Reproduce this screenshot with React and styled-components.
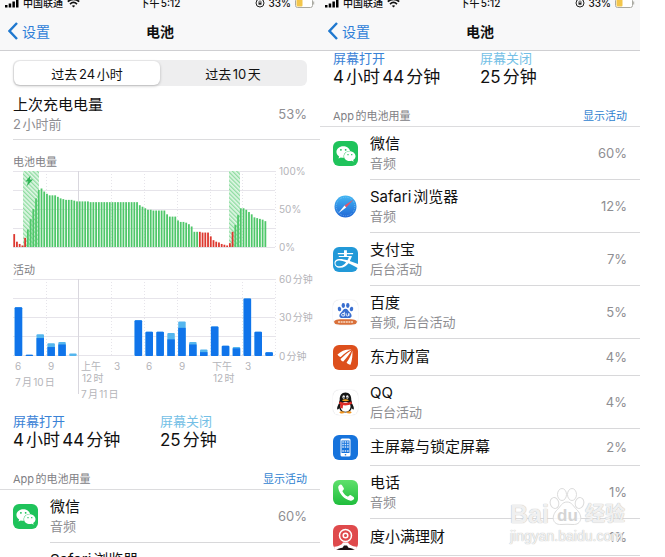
import React from 'react';
import styled, { createGlobalStyle } from 'styled-components';
import { FaWeixin, FaAlipay } from 'react-icons/fa';

const GlobalStyle = createGlobalStyle`
  * {
    box-sizing: border-box;
  }

  body {
    margin: 0;
    background: #fff;
    color: #111;
    font-family: Inter, 'Noto Sans CJK SC', sans-serif;
    text-autospace: normal;
  }

  button {
    border: 0;
    padding: 0;
    background: none;
    font: inherit;
  }
`;

const Page = styled.main`
  position: relative;
  display: grid;
  grid-template-columns: 1fr 1fr;
  height: 100vh;
  padding-right: 25px;
  overflow: hidden;
`;

const Phone = styled.section`
  min-width: 0;
  overflow: hidden;
`;

const Header = styled.header`
  position: relative;
  z-index: 1;
  background: #f8f8f9;
  border-bottom: 1px solid #cfcfd2;
`;

const StatusBar = styled.div`
  display: grid;
  grid-template-columns: 1fr auto 1fr;
  grid-template-rows: 100%;
  align-items: end;
  height: 12px;
  padding: 0 5px 2px;
  overflow: hidden;
  font-size: 10px;
  font-weight: 500;
  line-height: 14px;
`;

const StatusGroup = styled.div`
  display: flex;
  align-items: center;
  justify-content: ${({ $end }) => ($end ? 'flex-end' : 'flex-start')};
  gap: 4px;
`;

const NavBar = styled.nav`
  display: grid;
  grid-template-columns: 1fr auto 1fr;
  align-items: center;
  height: 38px;
  padding: 0 8px;
`;

const BackLink = styled.a`
  display: flex;
  align-items: center;
  gap: 4px;
  color: #2f7fd8;
  font-size: 14px;
  text-decoration: none;
`;

const Title = styled.h1`
  margin: 0;
  font-size: 14px;
  font-weight: 700;
`;

const Segments = styled.div`
  display: grid;
  grid-template-columns: 1fr 1fr;
  height: 26px;
  margin: 9px 13px;
  padding: 1px;
  border-radius: 6px;
  background: #eeeeef;
`;

const Segment = styled.button`
  border-radius: 6px;
  background: ${({ $active }) => ($active ? '#fff' : 'transparent')};
  box-shadow: ${({ $active }) => ($active ? '0 1px 3px rgba(0, 0, 0, 0.25)' : 'none')};
  color: #111;
  font-size: 13px;
`;

const Summary = styled.div`
  display: flex;
  align-items: center;
  justify-content: space-between;
  margin-left: 13px;
  padding: 0 13px 6px 0;
  border-bottom: 1px solid #dcdcde;
`;

const Name = styled.div`
  font-size: 15px;
  line-height: 20px;
`;

const Detail = styled.div`
  color: #8e8e92;
  font-size: 13px;
  line-height: 18px;
`;

const Percent = styled.span`
  color: #8e8e92;
  font-size: 13px;
`;

const Charts = styled.div`
  padding: 15px 0 0 13px;
`;

const ChartTitle = styled.h2`
  margin: 0;
  color: #808084;
  font-size: 11px;
  font-weight: 400;
  line-height: 14px;
`;

const Chart = styled.svg`
  display: block;
  width: 100%;
  overflow: visible;

  text {
    fill: #b4b4b9;
    font-size: 10px;
  }
`;

const ScreenTime = styled.dl`
  display: grid;
  grid-template-columns: 1fr 1fr;
  margin: ${({ $scrolled }) => ($scrolled ? '-1px' : '10px')} 13px 21px;

  dt {
    font-size: 13px;
    line-height: 16px;
  }

  dd {
    margin: 0;
    font-size: 17px;
    line-height: 22px;
  }
`;

const Term = styled.dt`
  color: ${({ $color }) => $color};
`;

const ListHeader = styled.div`
  display: flex;
  justify-content: space-between;
  padding: 0 13px 3px;
  border-bottom: 1px solid #dcdcde;
  color: #808084;
  font-size: 11px;
  line-height: 14px;
`;

const LinkButton = styled.button`
  color: #2f7fd0;
`;

const AppList = styled.ul`
  margin: 0;
  padding: 0;
  list-style: none;
`;

const AppRow = styled.li`
  display: flex;
  align-items: center;
  gap: 12px;
  padding-left: 13px;
`;

const AppBody = styled.div`
  display: flex;
  flex: 1;
  align-items: center;
  justify-content: space-between;
  height: ${({ $tall }) => ($tall ? 53 : 37)}px;
  padding-right: 13px;
  border-bottom: 1px solid #d8d8da;
`;

const AppIcon = styled.div`
  display: flex;
  flex: none;
  align-items: center;
  justify-content: center;
  width: 25px;
  height: 25px;
  border-radius: 6px;
  background: ${({ $background }) => $background};
  box-shadow: ${({ $outlined }) => ($outlined ? '0 0 1px #c4c4c8' : 'none')};
  color: ${({ $color }) => $color || '#fff'};
  overflow: hidden;

  svg {
    flex: none;
  }
`;

const Watermark = styled.div`
  position: absolute;
  right: 37px;
  bottom: 12px;
  width: 118px;
  color: rgba(255, 255, 255, 0.8);
  font-family: 'Liberation Sans', 'Noto Sans CJK SC', sans-serif;
  text-shadow: 0 0 1px #bbb, 0 0 1px #ccc;
  white-space: nowrap;
  pointer-events: none;
`;

const WatermarkLogo = styled.div`
  display: flex;
  align-items: flex-end;
  font-size: 20px;
  font-weight: 700;
  line-height: 26px;
`;

const WatermarkBai = styled.span`
  font-size: 25px;
`;

const Paw = styled.svg`
  flex: none;
  overflow: visible;

  text {
    fill: #d4d4d4;
    font-size: 17px;
    text-shadow: none;
  }
`;

const WatermarkUrl = styled.div`
  font-size: 14px;
  line-height: 18px;
`;

// charge level per quarter of an hour
const levels = [
  17, 7, 4, 2, 12, 23, 37, 50, 64, 75, 77, 73, 70, 68, 68, 68, 66, 64, 63, 62, 62, 62, 61,
  60, 60, 60, 60, 60, 59, 59, 59, 59, 59, 59, 59, 59, 59, 59, 59, 59, 59, 59, 59, 59, 59, 59,
  55, 53, 51, 49, 49, 48, 48, 48, 48, 48, 43, 40, 40, 40, 35, 33, 33, 32, 30, 27, 20, 20,
  20, 19, 19, 19, 14, 9, 7, 6, 4, 3, 2, 5, 20, 29, 42, 51, 51, 49, 46, 43, 39, 38, 37, 36, 34,
];

// minutes per hour: [screen on, screen off]
const activity = [
  [38, 0], [1, 0], [14, 3], [7, 3], [9, 2], [0, 2], [0, 0], [0, 0], [0, 0], [0, 0], [0, 0],
  [28, 0], [19, 0], [19, 0], [13, 5], [22, 5], [9, 2], [3, 2], [23, 0], [8, 0], [6, 1],
  [45, 0], [19, 0], [3, 0],
];

const isLow = (i) => i < 5 || (i > 67 && i < 81);

const Grid = ({ bottom }) => (
  <g stroke="#e6e4ea" shapeRendering="crispEdges">
    {[0, 1, 2, 3, 4].map((n) => (
      <line key={n} x1="0" x2="262" y1={2.5 + n * 19} y2={2.5 + n * 19} />
    ))}
    {[33, 98, 131, 164, 197, 229, 262].map((x) => (
      <line key={x} x1={x + 0.5} x2={x + 0.5} y1="2" y2="79" strokeDasharray="1 2" />
    ))}
    <line x1="65.5" x2="65.5" y1="2" y2={bottom} stroke="#d9d7de" />
  </g>
);

const BatteryChart = () => (
  <Chart viewBox="0 0 307 94" role="img" aria-label="电池电量">
    <defs>
      <pattern id="hatch" width="3" height="3" patternUnits="userSpaceOnUse" patternTransform="rotate(-45)">
        <rect width="3" height="3" fill="#e2f7e7" />
        <rect width="1.3" height="3" fill="#8edca0" />
      </pattern>
    </defs>
    <Grid bottom={79} />
    <rect x="10" y="2" width="16" height="76" fill="url(#hatch)" />
    <rect x="216" y="2" width="11" height="76" fill="url(#hatch)" />
    {levels.map((level, i) => (
      <rect
        key={i}
        x={i * 2.73 + 0.3}
        y={78 - level * 0.76}
        width="1.8"
        height={level * 0.76}
        fill={isLow(i) ? '#dd382f' : '#4fc76a'}
      />
    ))}
    <path d="M17.500 6.500l-5 6h2.800l-1.800 5 6.500-7h-3.200z" fill="#2fb455" />
    <text x="266" y="6">100%</text>
    <text x="266" y="44">50%</text>
    <text x="266" y="82">0%</text>
  </Chart>
);

const ActivityChart = () => (
  <Chart viewBox="0 0 307 126" role="img" aria-label="活动">
    <Grid bottom={117} />
    {activity.map(([on, off], i) => (
      <g key={i}>
        <rect x={i * 10.9 + 1.7} y={79 - (on + off) * 1.28} width="7.500" height={(on + off) * 1.28} rx="1" fill="#55b6ee" />
        <rect x={i * 10.9 + 1.7} y={79 - on * 1.28} width="7.500" height={on * 1.28} rx={off ? 0 : 1} fill="#1074ea" />
      </g>
    ))}
    <text x="266" y="6">60分钟</text>
    <text x="266" y="44">30分钟</text>
    <text x="266" y="83">0分钟</text>
    <text x="2" y="93">6</text>
    <text x="35" y="93">9</text>
    <text x="68" y="93">上午</text>
    <text x="101" y="93">3</text>
    <text x="133" y="93">6</text>
    <text x="166" y="93">9</text>
    <text x="199" y="93">下午</text>
    <text x="232" y="93">3</text>
    <text x="69" y="105">12时</text>
    <text x="200" y="105">12时</text>
    <text x="2" y="109">7月10日</text>
    <text x="68" y="121">7月11日</text>
  </Chart>
);

const BaiduIcon = () => (
  <svg width="25" height="25" viewBox="0 0 25 25">
    <g fill="#3a6fd0">
      <ellipse cx="6.500" cy="9" rx="1.700" ry="2.300" transform="rotate(-15 6.500 9)" />
      <ellipse cx="10.300" cy="5.500" rx="1.700" ry="2.400" />
      <ellipse cx="14.800" cy="5.500" rx="1.700" ry="2.400" />
      <ellipse cx="18.500" cy="9" rx="1.700" ry="2.300" transform="rotate(15 18.500 9)" />
      <path d="M12.500 8.800c2.300 0 2.800 2.200 4.200 3.500 3 2.700 2.300 6-1.200 5.800-2-.1-4-.1-6 0-3.500.2-4.200-3.100-1.200-5.800 1.400-1.300 1.900-3.500 4.200-3.500z" />
    </g>
    <path d="M11.300 11.800v4.200H9.800c-1.700 0-1.700-2.500 0-2.500h1.500M13.200 13.400v1.800c0 1 2.600 1 2.600 0v-1.800V16" fill="none" stroke="#fff" strokeWidth="0.9" />
    <path d="M1 22.200c0-2.500 3-3 11.500-3s11.500.5 11.500 3-3 2.500-11.500 2.500S1 24.700 1 22.200z" fill="#d9703a" />
    <path d="M5 22h15" stroke="#f8d9c4" strokeWidth="1.600" strokeDasharray="2 .6" />
  </svg>
);

const EastMoneyIcon = () => (
  <svg width="25" height="25" viewBox="0 0 25 25" fill="#fff">
    <path d="M4.500 9.500C8 6 13 4 18.500 4.500c-4 1.500-7 4-10.800 7.500-1.400-.3-2.500-1.200-3.200-2.500z" />
    <path d="M18.600 5.200c-2 3.800-4.600 7-8.300 11.300-1.400-.4-2.300-1.200-2.800-2.600 4-3.600 7-6.400 11.100-8.700z" />
    <path d="M19.300 5.500c.5 4.700-.1 9.500-1.800 14.300-1.700-.2-2.900-.8-3.900-2.200 2.800-4 4.700-7.600 5.700-12.100z" />
  </svg>
);

const QQIcon = () => (
  <svg width="25" height="25" viewBox="0 0 25 25">
    <path d="M7 12.500c-2 2.500-3.500 5-2.700 7 .7.300 1.700-.8 2.300-1.700M18 12.500c2 2.500 3.500 5 2.700 7-.7.300-1.700-.8-2.300-1.700" fill="#151515" />
    <path d="M12.500 2.500c-4 0-6 3-5.800 7.500C4.500 16 6 22.500 12.500 22.500s8-6.500 5.800-12.500c.2-4.500-1.800-7.500-5.800-7.500z" fill="#151515" />
    <path d="M12.500 12c-3.500 0-5.300 2.500-5 5 .3 3 2.300 4.700 5 4.700s4.700-1.700 5-4.700c.3-2.500-1.500-5-5-5z" fill="#fff" />
    <path d="M6.600 11.500c3.800 1.700 8 1.700 11.800 0l.6 2.200c-2.700 1.500-6 2-9 1.600l-.3 3.200-2.500-.4.200-3.600-1.400-.7z" fill="#df2c28" />
    <ellipse cx="10.700" cy="7" rx="1.300" ry="1.800" fill="#fff" />
    <ellipse cx="14.300" cy="7" rx="1.300" ry="1.800" fill="#fff" />
    <circle cx="11" cy="7.300" r=".6" />
    <circle cx="14" cy="7.300" r=".6" />
    <path d="M8.800 10.200c2-1.200 5.400-1.200 7.400 0-2 1.500-5.400 1.500-7.400 0z" fill="#f5a51f" />
    <path d="M6.500 22.500c0-1.500 3-1.700 5-.8v1.400c-1.500.7-5 .6-5-.6zM18.500 22.500c0-1.500-3-1.700-5-.8v1.400c1.500.7 5 .6 5-.6z" fill="#f0941f" />
  </svg>
);

const HomeScreenIcon = () => (
  <svg width="25" height="25" viewBox="0 0 25 25">
    <rect x="7.500" y="3.500" width="10" height="18" rx="1.600" fill="#fff" />
    <rect x="8.500" y="5.500" width="8" height="12.500" fill="#1673dc" />
    {[6.5, 9, 11.5, 15.5].map((y) => (
      <path key={y} d={`M9.300 ${y + 0.5}h6.400`} stroke="#d9e9fb" strokeWidth="1.300" strokeDasharray="1.500 .9" />
    ))}
    <circle cx="12.500" cy="19.700" r=".8" fill="#1673dc" />
  </svg>
);

const PhoneIcon = () => (
  <svg width="25" height="25" viewBox="0 0 25 25" fill="#fff">
    <path d="M5.200 7.600c-.2-1.300 1.500-3 2.600-3.100.6 0 .9.300 1.200.8l1.700 2.800c.4.700.2 1.300-.4 1.800-.9.700-1 1.200-.5 2 1.200 1.900 2.500 3.200 4.300 4.300.8.500 1.300.4 2-.5.5-.6 1.100-.8 1.800-.4l2.600 1.700c.6.400.8.900.6 1.500-.5 1.400-2.100 2.400-3.500 2.200C11.500 20 5.900 13.500 5.200 7.600z" />
  </svg>
);

const DuxiaomanIcon = () => (
  <svg width="25" height="25" viewBox="0 0 25 25">
    <circle cx="12.500" cy="10.500" r="6" fill="none" stroke="#fff" strokeWidth="1.500" />
    <circle cx="12.500" cy="10.500" r="2.300" fill="none" stroke="#fff" strokeWidth="1.500" />
    <path d="M0 25v-3c4-.5 8.500-1.500 10-4.500h5c1.500 3 6 4 10 4.500v3z" fill="#fff" />
    <path d="M3.500 25c1-1.700 4-1.800 6-2.300l1.500-2.200h3l1.500 2.200c2 .5 5 .6 6 2.300z" fill="#1c1113" />
  </svg>
);

const SafariIcon = () => (
  <svg width="25" height="25" viewBox="0 0 25 25">
    <defs>
      <linearGradient id="sky" x2="0" y2="1">
        <stop stopColor="#42b6f3" />
        <stop offset="1" stopColor="#1f66d6" />
      </linearGradient>
    </defs>
    <circle cx="12.500" cy="12.500" r="11" fill="url(#sky)" />
    <circle cx="12.500" cy="12.500" r="9.300" fill="none" stroke="#a8d8f8" strokeDasharray=".4 1.400" />
    <path d="M20.500 5.500l-9 6 1.700 1.900z" fill="#e5566a" />
    <path d="M5 19.500l6.500-8 1.700 1.900z" fill="#fff" />
  </svg>
);

const apps = [
  { name: '微信', detail: '音频', percent: 60, background: '#1fc35b', icon: <FaWeixin size={20} /> },
  { name: 'Safari浏览器', detail: '音频', percent: 12, background: '#fff', icon: <SafariIcon /> },
  { name: '支付宝', detail: '后台活动', percent: 7, background: '#fff', color: '#2299d8', icon: <FaAlipay size={29} /> },
  { name: '百度', detail: '音频, 后台活动', percent: 5, background: '#fff', outlined: true, icon: <BaiduIcon /> },
  { name: '东方财富', percent: 4, background: '#dd4f1c', icon: <EastMoneyIcon /> },
  { name: 'QQ', detail: '后台活动', percent: 4, background: '#fff', outlined: true, icon: <QQIcon /> },
  { name: '主屏幕与锁定屏幕', percent: 2, background: '#1673dc', icon: <HomeScreenIcon /> },
  { name: '电话', detail: '音频', percent: 1, background: 'linear-gradient(#5fe06c, #1fbd3c)', icon: <PhoneIcon /> },
  { name: '度小满理财', percent: 1, background: '#df4a4c', icon: <DuxiaomanIcon /> },
];

const PhoneHeader = () => (
  <Header>
    <StatusBar>
      <StatusGroup>
        <svg width="14" height="10" viewBox="0 0 14 10">
          <path d="M0 7h2.500v2.500H0zM3.700 5.500h2.500v4H3.700zM7.400 3.500h2.500v6H7.400zM11 1h2.500v8.500H11z" />
        </svg>
        <span>中国联通</span>
        <svg width="13" height="10" viewBox="0 0 13 10" fill="none" stroke="#111" strokeWidth="1.700">
          <path d="M.8 3.700c3.300-3.200 8.100-3.200 11.400 0M3 6.100c2.100-2 4.900-2 7 0" />
          <path d="M6.500 9.500L4.800 7.800c1-.9 2.400-.9 3.400 0z" fill="#111" stroke="none" />
        </svg>
      </StatusGroup>
      <span>下午5:12</span>
      <StatusGroup $end>
        <svg width="10" height="10" viewBox="0 0 10 10" fill="none" stroke="#222">
          <circle cx="5" cy="5" r="4" />
          <rect x="3.500" y="4.700" width="3" height="2" fill="#222" stroke="none" />
          <path d="M4 5V3.700c0-1.200 2-1.200 2 0V5" strokeWidth=".7" />
        </svg>
        <span>33%</span>
        <svg width="20" height="10" viewBox="0 0 20 10">
          <rect x=".5" y=".5" width="17" height="9" rx="2" fill="#fff" stroke="#a9a9a2" />
          <rect x="1.500" y="1.500" width="6" height="7" rx="1" fill="#f3c64b" />
          <path d="M18.700 3.500v3" stroke="#a9a9a2" />
        </svg>
      </StatusGroup>
    </StatusBar>
    <NavBar>
      <BackLink href="#settings">
        <svg width="10" height="18" viewBox="0 0 10 18" fill="none" stroke="#1f78cf" strokeWidth="2.400">
          <path d="M9 1L1.500 9 9 17" />
        </svg>
        设置
      </BackLink>
      <Title>电池</Title>
    </NavBar>
  </Header>
);

const Usage = ({ scrolled, items }) => (
  <>
    <ScreenTime $scrolled={scrolled}>
      <div>
        <Term $color="#3a82d6">屏幕打开</Term>
        <dd>4小时44分钟</dd>
      </div>
      <div>
        <Term $color="#74bfe6">屏幕关闭</Term>
        <dd>25分钟</dd>
      </div>
    </ScreenTime>
    <ListHeader>
      <span>App的电池用量</span>
      <LinkButton type="button">显示活动</LinkButton>
    </ListHeader>
    <AppList>
      {items.map((app) => (
        <AppRow key={app.name}>
          <AppIcon $background={app.background} $color={app.color} $outlined={app.outlined}>
            {app.icon}
          </AppIcon>
          <AppBody $tall={Boolean(app.detail)}>
            <div>
              <Name>{app.name}</Name>
              {app.detail && <Detail>{app.detail}</Detail>}
            </div>
            <Percent>{app.percent}%</Percent>
          </AppBody>
        </AppRow>
      ))}
    </AppList>
  </>
);

const App = () => (
  <>
    <GlobalStyle />
    <Page>
      <Phone>
        <PhoneHeader />
        <Segments>
          <Segment type="button" $active aria-pressed="true">过去24小时</Segment>
          <Segment type="button" aria-pressed="false">过去10天</Segment>
        </Segments>
        <Summary>
          <div>
            <Name>上次充电电量</Name>
            <Detail>2小时前</Detail>
          </div>
          <Percent>53%</Percent>
        </Summary>
        <Charts>
          <ChartTitle>电池电量</ChartTitle>
          <BatteryChart />
          <ChartTitle>活动</ChartTitle>
          <ActivityChart />
        </Charts>
        <Usage items={apps.slice(0, 2)} />
      </Phone>
      <Phone>
        <PhoneHeader />
        <Usage scrolled items={apps} />
      </Phone>
      <Watermark>
        <WatermarkLogo>
          <WatermarkBai>Bai</WatermarkBai>
          <Paw width="36" height="40" viewBox="0 0 36 40">
            <g fill="#fff" fillOpacity="0.8" stroke="#dcdcdc">
              <ellipse cx="5.500" cy="16" rx="4.300" ry="5.500" transform="rotate(-12 5.500 16)" />
              <ellipse cx="13" cy="7.500" rx="4.500" ry="6" />
              <ellipse cx="23" cy="7.500" rx="4.500" ry="6" />
              <ellipse cx="30.500" cy="16" rx="4.300" ry="5.500" transform="rotate(12 30.500 16)" />
              <path d="M18 15c5 0 6.500 4.500 9.500 7.500 7 6.500 5 15.500-3.500 15-4-.3-8-.3-12 0-8.500.5-10.500-8.500-3.500-15C11.500 19.500 13 15 18 15z" />
            </g>
            <text x="8" y="34">du</text>
          </Paw>
          <span>经验</span>
        </WatermarkLogo>
        <WatermarkUrl>jingyan.baidu.com</WatermarkUrl>
      </Watermark>
    </Page>
  </>
);

export default App;
